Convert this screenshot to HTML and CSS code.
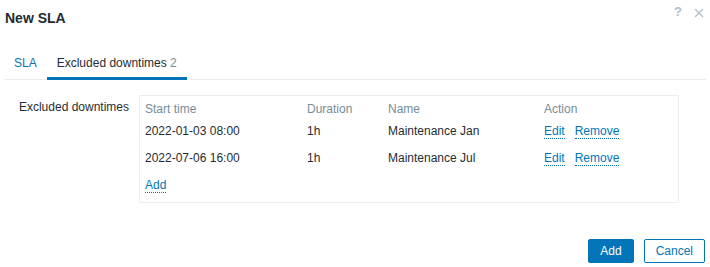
FILE: index.html
```html
<!DOCTYPE html>
<html lang="en">
<head>
    <meta charset="UTF-8">
    <title>New SLA</title>
    <link rel="stylesheet" href="styles.css">
</head>
<body>
    <div class="dialog">
        <div class="dialog-header">
            <h4>New SLA</h4>
            <div class="header-controls">
                <span class="btn-help">?</span>
                <svg class="btn-close" width="10" height="10" viewBox="0 0 10 10">
                    <path d="M1 1 L9 9 M9 1 L1 9" stroke="#bcc4c9" stroke-width="1.6" fill="none"/>
                </svg>
            </div>
        </div>

        <ul class="tabs">
            <li class="tab"><a href="#">SLA</a></li>
            <li class="tab active"><span>Excluded downtimes</span> <sup class="tab-count">2</sup></li>
        </ul>

        <div class="form-row">
            <label class="form-label">Excluded downtimes</label>
            <div class="form-field">
                <table class="list">
                    <thead>
                        <tr>
                            <th class="col-start">Start time</th>
                            <th class="col-duration">Duration</th>
                            <th class="col-name">Name</th>
                            <th>Action</th>
                        </tr>
                    </thead>
                    <tbody>
                        <tr>
                            <td>2022-01-03 08:00</td>
                            <td>1h</td>
                            <td>Maintenance Jan</td>
                            <td><a class="link-action" href="#">Edit</a><a class="link-action" href="#">Remove</a></td>
                        </tr>
                        <tr>
                            <td>2022-07-06 16:00</td>
                            <td>1h</td>
                            <td>Maintenance Jul</td>
                            <td><a class="link-action" href="#">Edit</a><a class="link-action" href="#">Remove</a></td>
                        </tr>
                    </tbody>
                    <tfoot>
                        <tr>
                            <td colspan="4"><a class="link-action" href="#">Add</a></td>
                        </tr>
                    </tfoot>
                </table>
            </div>
        </div>

        <div class="dialog-footer">
            <button class="btn">Add</button>
            <button class="btn btn-alt">Cancel</button>
        </div>
    </div>
</body>
</html>
```

FILE: styles.css
```css
body {
    margin: 0;
    font-family: "Liberation Sans", Arial, sans-serif;
    font-size: 12px;
    line-height: 14px;
    color: #1f2c33;
    background: #fff;
}
.dialog {
    height: 267px;
    display: flex;
    flex-direction: column;
    box-sizing: border-box;
}
.dialog-header {
    display: flex;
    justify-content: space-between;
    padding: 9px 5px 0 5px;
    height: 40px;
    box-sizing: border-box;
}
.dialog-header h4 {
    margin: 0;
    font-size: 14px;
    line-height: 18px;
    font-weight: bold;
    color: #1f2c33;
}
.header-controls {
    display: flex;
    align-items: flex-start;
    gap: 12px;
    margin-top: -5px;
}
.btn-help {
    color: #a9c1d2;
    font-size: 13px;
    font-weight: bold;
    line-height: 16px;
}
.btn-close {
    margin-top: 4px;
    margin-right: 1px;
}
.tabs {
    list-style: none;
    margin: 0 4px;
    padding: 0;
    display: flex;
    border-bottom: 1px solid #ebeef0;
    height: 40px;
    box-sizing: border-box;
    align-items: flex-end;
}
.tab {
    padding: 0 10px 7px 10px;
    margin-bottom: -1px;
    border-bottom: 3px solid transparent;
}
.tab a {
    color: #0275b8;
    text-decoration: none;
}
.tab.active {
    border-bottom-color: #0275b8;
}
.tab-count {
    color: #768d99;
    font-size: 12px;
    vertical-align: baseline;
}
.form-row {
    display: flex;
    margin-top: 15px;
}
.form-label {
    width: 125px;
    margin-left: 4px;
    padding-top: 5px;
    text-align: right;
}
.form-field {
    margin-left: 10px;
}
.list {
    width: 540px;
    border: 1px solid #ebeef0;
    border-collapse: separate;
    border-spacing: 0;
}
.list th {
    font-weight: normal;
    color: #768d99;
    text-align: left;
    padding: 6px 5px 2px 5px;
}
.list td {
    padding: 6px 5px 7px 5px;
    white-space: nowrap;
}
.list tfoot td {
    padding-bottom: 10px;
}
.col-start {
    width: 152px;
}
.col-duration {
    width: 71px;
}
.col-name {
    width: 146px;
}
.link-action {
    color: #0275b8;
    text-decoration: none;
    border-bottom: 1px dotted #0275b8;
}
.link-action + .link-action {
    margin-left: 10px;
}
.dialog-footer {
    margin-top: auto;
    display: flex;
    justify-content: flex-end;
    gap: 10px;
    padding: 0 5px 4px 0;
}
.btn {
    height: 24px;
    padding: 0 11px;
    font-family: "Liberation Sans", Arial, sans-serif;
    font-size: 12px;
    border: 1px solid #0275b8;
    border-radius: 2px;
    background: #0275b8;
    color: #fff;
}
.btn-alt {
    background: #fff;
    color: #0275b8;
}
```
